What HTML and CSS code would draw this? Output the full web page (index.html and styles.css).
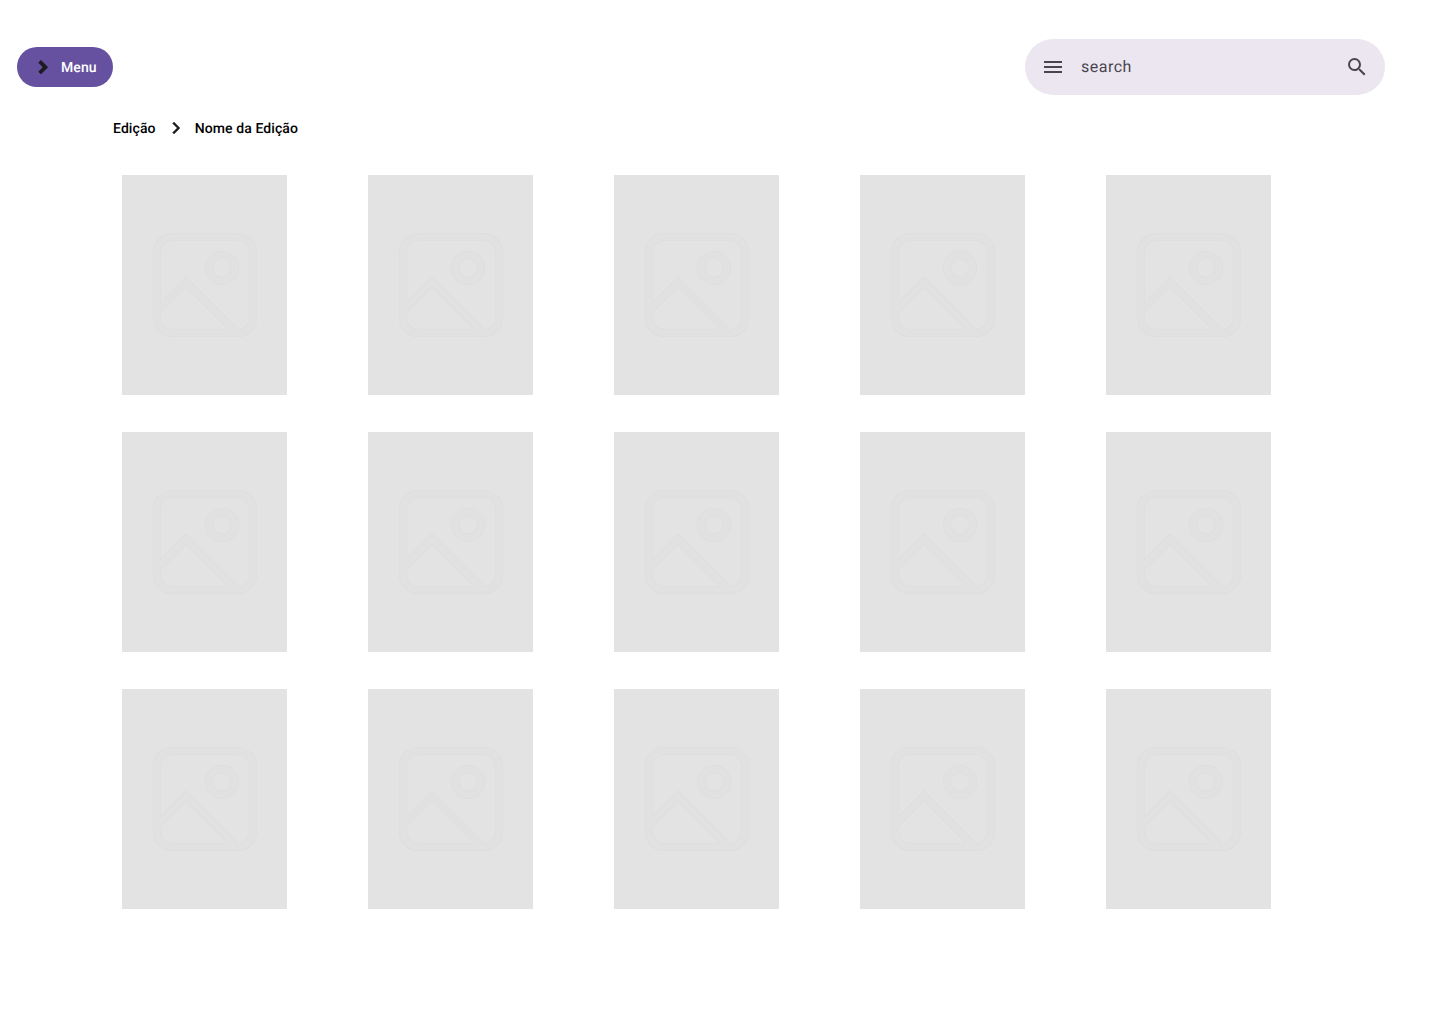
FILE: index.html
```html
<!DOCTYPE html>
<html lang="pt">
<head>
<meta charset="utf-8">
<title>Edição</title>
<link rel="stylesheet" href="styles.css">
</head>
<body>
<svg class="defs" width="0" height="0" aria-hidden="true">
  <symbol id="ph" viewBox="0 0 104 104">
    <g class="ph-edge">
      <rect x="4" y="4" width="96" height="96" rx="15"/>
      <circle cx="69" cy="35" r="13"/>
      <path d="M5 77 33 49 81 97"/>
    </g>
    <g class="ph-fill">
      <rect x="4" y="4" width="96" height="96" rx="15"/>
      <circle cx="69" cy="35" r="13"/>
      <path d="M5 77 33 49 81 97"/>
    </g>
  </symbol>
</svg>
<header class="top">
  <button class="menu-btn" type="button">
    <svg class="menu-icon" viewBox="0 0 24 24" width="24" height="24"><path d="M8.6 6.4 14.4 12.2 8.6 18"/></svg>
    <span class="menu-label">Menu</span>
  </button>
  <div class="search">
    <svg class="search-icon" viewBox="0 0 24 24" width="24" height="24"><path d="M3 18h18v-2H3zm0-5h18v-2H3zm0-7v2h18V6z"/></svg>
    <span class="search-text">search</span>
    <svg class="search-icon" viewBox="0 0 24 24" width="24" height="24"><path d="M15.5 14h-.79l-.28-.27A6.47 6.47 0 0 0 16 9.5 6.5 6.5 0 1 0 9.5 16c1.61 0 3.09-.59 4.23-1.57l.27.28v.79l5 4.99L20.49 19zm-6 0C7.01 14 5 11.99 5 9.5S7.01 5 9.5 5 14 7.01 14 9.5 11.99 14 9.5 14"/></svg>
  </div>
</header>
<nav class="crumbs">
  <span>Edição</span>
  <svg viewBox="0 0 24 24" width="24" height="24"><path d="M10 6 8.6 7.4 13.2 12 8.6 16.6 10 18l6-6z"/></svg>
  <span>Nome da Edição</span>
</nav>
<main class="grid">
  <div class="card"><svg class="ph" width="104" height="104"><use href="#ph"/></svg></div>
  <div class="card"><svg class="ph" width="104" height="104"><use href="#ph"/></svg></div>
  <div class="card"><svg class="ph" width="104" height="104"><use href="#ph"/></svg></div>
  <div class="card"><svg class="ph" width="104" height="104"><use href="#ph"/></svg></div>
  <div class="card"><svg class="ph" width="104" height="104"><use href="#ph"/></svg></div>
  <div class="card"><svg class="ph" width="104" height="104"><use href="#ph"/></svg></div>
  <div class="card"><svg class="ph" width="104" height="104"><use href="#ph"/></svg></div>
  <div class="card"><svg class="ph" width="104" height="104"><use href="#ph"/></svg></div>
  <div class="card"><svg class="ph" width="104" height="104"><use href="#ph"/></svg></div>
  <div class="card"><svg class="ph" width="104" height="104"><use href="#ph"/></svg></div>
  <div class="card"><svg class="ph" width="104" height="104"><use href="#ph"/></svg></div>
  <div class="card"><svg class="ph" width="104" height="104"><use href="#ph"/></svg></div>
  <div class="card"><svg class="ph" width="104" height="104"><use href="#ph"/></svg></div>
  <div class="card"><svg class="ph" width="104" height="104"><use href="#ph"/></svg></div>
  <div class="card"><svg class="ph" width="104" height="104"><use href="#ph"/></svg></div>
</main>
</body>
</html>
```
FILE: styles.css
```css
* { box-sizing: border-box; }
html, body { margin: 0; background: #fff; }
body {
  font-family: Roboto, "Liberation Sans", sans-serif;
  min-height: 1024px;
  text-rendering: geometricPrecision;
}
.defs { position: absolute; }
.top {
  display: flex;
  justify-content: space-between;
  align-items: center;
  padding: 39px 55px 0 17px;
}
.menu-btn {
  display: flex;
  align-items: center;
  gap: 6px;
  width: 96px;
  height: 40px;
  padding: 0 16px 0 14px;
  border: 0;
  border-radius: 20px;
  background: #65519f;
  color: #fff;
  font: 500 14px/20px Roboto, sans-serif;
  letter-spacing: 0.1px;
  text-rendering: geometricPrecision;
}
.menu-label { padding-top: 2px; }
.menu-icon { fill: none; stroke: #1d1b20; stroke-width: 3.8; flex: none; }
.search {
  display: flex;
  align-items: center;
  width: 360px;
  height: 56px;
  padding: 0 16px;
  border-radius: 28px;
  background: #ece6f0;
  color: #49454f;
  font-size: 16px;
  letter-spacing: 0.5px;
}
.search-icon { fill: #49454f; flex: none; }
.search-text { flex: 1; padding: 0 0 2px 16px; }
.crumbs {
  display: flex;
  align-items: center;
  gap: 8px;
  height: 24px;
  margin-top: 22px;
  padding-left: 113px;
  font-size: 14px;
  font-weight: 500;
  line-height: 20px;
  letter-spacing: 0.1px;
  color: #000;
}
.crumbs svg { fill: #1d1b20; stroke: #1d1b20; stroke-width: 0.4; margin: 0 -1px 2px 0; }
.grid {
  display: grid;
  grid-template-columns: repeat(5, 165px);
  column-gap: 81px;
  row-gap: 37px;
  margin-top: 34px;
  padding-left: 122px;
}
.card {
  display: flex;
  align-items: center;
  justify-content: center;
  height: 220px;
  background: #e3e3e3;
}
.ph { fill: none; }
.ph-edge { stroke: #dcdcdc; stroke-width: 8; }
.ph-fill { stroke: #e1e1e1; stroke-width: 7; }
```
